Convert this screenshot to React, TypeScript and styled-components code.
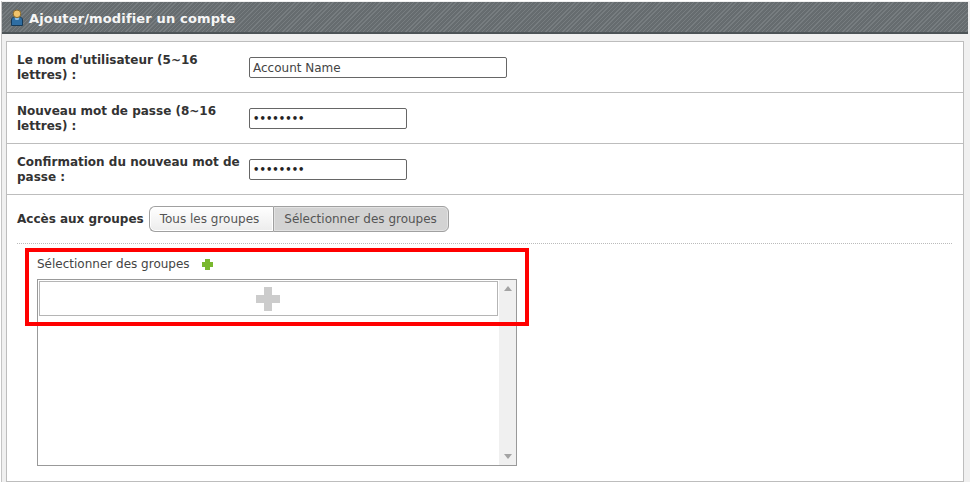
import React from "react";
import styled, { createGlobalStyle } from "styled-components";

const Global = createGlobalStyle`
  html, body { margin: 0; padding: 0; background: #fff; }
  body { font-family: "DejaVu Sans", Verdana, sans-serif; font-size: 12px; color: #333; }
`;

const Page = styled.div`
  position: relative;
  width: 970px;
  height: 482px;
  overflow: hidden;
  box-sizing: border-box;
  padding: 2px 2px 0;
  background: #f0f0f0;
  box-shadow: inset 1px 1px 0 #fff, inset 2px 0 0 #c4c4c4;
`;

const Header = styled.div`
  height: 32px;
  box-sizing: border-box;
  display: flex;
  align-items: center;
  gap: 4px;
  padding: 2px 0 0 7px;
  border-bottom: 2px solid #4d5457;
  background-color: #6e7477;
  background-image: repeating-linear-gradient(135deg, #777d80 0 1px, #666c6f 1px 3px);
  color: #f6f6f6;
  font-weight: bold;
  font-size: 13px;
  letter-spacing: 0.15px;
`;

const HeaderIcon = styled.svg`
  margin-top: -2px;
  flex: none;
`;

const Panel = styled.div`
  margin: 7px 4px 0;
  border: 1px solid #bdbdbd;
  background: #fff;
  height: 441px;
  box-sizing: border-box;
`;

const Row = styled.div`
  height: 51px;
  box-sizing: border-box;
  border-bottom: 1px solid #bdbdbd;
  padding: 1px 10px 0;
  display: flex;
  align-items: center;
`;

const Label = styled.div`
  width: 232px;
  flex: none;
  font-weight: bold;
  line-height: 15px;
  color: #333;
`;

const Field = styled.div<{ $w: number }>`
  width: ${(p) => p.$w}px;
  height: 21px;
  margin-top: -1px;
  box-sizing: border-box;
  border: 1px solid #666;
  border-radius: 2px;
  padding: 1px 3px 0;
  display: flex;
  align-items: center;
  color: #444;
  font-size: 12px;
  white-space: nowrap;
`;

const Dots = styled.span`
  font-size: 10px;
  letter-spacing: 0.05px;
  color: #222;
  font-weight: bold;
`;

const Access = styled.div`
  padding: 0 10px;
  height: 48px;
  display: flex;
  align-items: center;
  gap: 5px;
`;

const AccessLabel = styled.div`
  font-weight: bold;
  color: #333;
`;

const Segments = styled.div`
  display: flex;
`;

const Segment = styled.div<{ $active?: boolean; $first?: boolean }>`
  height: 26px;
  box-sizing: border-box;
  border: 1px solid #a0a0a0;
  ${(p) =>
    p.$first
      ? "border-radius: 6px 0 0 6px; border-right: 0; padding: 0 14px 0 10px;"
      : "border-radius: 0 6px 6px 0; padding: 0 11px 0 10px;"}
  display: flex;
  align-items: center;
  color: #555;
  background: ${(p) => (p.$active ? "#d3d3d3" : "linear-gradient(#fff, #ececec)")};
  box-shadow: inset 0 0 0 1px ${(p) => (p.$active ? "#e2e2e2" : "#fff")};
`;

const Section = styled.div`
  margin: 0 11px 0 10px;
  border-top: 1px dotted #bbb;
  padding: 12px 0 0 20px;
`;

const PickerTitle = styled.div`
  display: flex;
  align-items: center;
  height: 16px;
  color: #444;
`;

const TitleText = styled.span`
  width: 165px;
  flex: none;
  white-space: nowrap;
`;

const ListBox = styled.div`
  margin-top: 7px;
  width: 480px;
  height: 187px;
  box-sizing: border-box;
  border: 1px solid #999;
  display: flex;
`;

const ListBody = styled.div`
  flex: 1;
  padding: 1px;
`;

const AddRow = styled.div`
  height: 35px;
  box-sizing: border-box;
  border: 1px solid #b5b5b5;
  padding-right: 2px;
  display: flex;
  align-items: center;
  justify-content: center;
  background: #fff;
`;

const ScrollBar = styled.div`
  width: 17px;
  flex: none;
  background: #f0f0f0;
  display: flex;
  flex-direction: column;
  justify-content: space-between;
  align-items: center;
  padding: 6px 0;
  box-sizing: border-box;
`;

const Highlight = styled.div`
  position: absolute;
  left: 25px;
  top: 248px;
  width: 504px;
  height: 78px;
  box-sizing: border-box;
  border: 4px solid #f00;
`;

const Plus = ({ size, color, bar }: { size: number; color: string; bar: number }) => {
  const o = (size - bar) / 2;
  return (
    <svg width={size} height={size} viewBox={`0 0 ${size} ${size}`} shapeRendering="crispEdges">
      <rect x={o} y={0} width={bar} height={size} fill={color} />
      <rect x={0} y={o} width={size} height={bar} fill={color} />
    </svg>
  );
};

const UserIcon = () => (
  <HeaderIcon width="16" height="17" viewBox="0 0 16 17">
    <path d="M2.500 16.500V11c0-2 1.500-3 3-3h5c1.500 0 3 1 3 3v5.500Z" fill="#2f6ea3" stroke="#173a57" />
    <path d="M5.500 8.500h5l-1 2.500h-3Z" fill="#8dbde0" />
    <circle cx="8" cy="4.800" r="3.800" fill="#f0c46c" stroke="#8a6a2a" />
  </HeaderIcon>
);

const Arrow = ({ up }: { up?: boolean }) => (
  <svg width="8" height="5" viewBox="0 0 8 5">
    <path d={up ? "M4 0L8 5H0Z" : "M0 0H8L4 5Z"} fill="#a3a3a3" />
  </svg>
);

export default function App() {
  return (
    <Page>
      <Global />
      <Header>
        <UserIcon />
        Ajouter/modifier un compte
      </Header>
      <Panel>
        <Row>
          <Label>Le nom d'utilisateur (5~16 lettres) :</Label>
          <Field $w={258}>Account Name</Field>
        </Row>
        <Row>
          <Label>Nouveau mot de passe (8~16 lettres) :</Label>
          <Field $w={158}><Dots>••••••••</Dots></Field>
        </Row>
        <Row>
          <Label>Confirmation du nouveau mot de passe :</Label>
          <Field $w={158}><Dots>••••••••</Dots></Field>
        </Row>
        <Access>
          <AccessLabel>Accès aux groupes</AccessLabel>
          <Segments>
            <Segment $first>Tous les groupes</Segment>
            <Segment $active>Sélectionner des groupes</Segment>
          </Segments>
        </Access>
        <Section>
          <PickerTitle>
            <TitleText>Sélectionner des groupes</TitleText>
            <Plus size={11} bar={5} color="#7ab82f" />
          </PickerTitle>
          <ListBox>
            <ListBody>
              <AddRow>
                <Plus size={24} bar={8} color="#cccccc" />
              </AddRow>
            </ListBody>
            <ScrollBar>
              <Arrow up />
              <Arrow />
            </ScrollBar>
          </ListBox>
        </Section>
      </Panel>
      <Highlight />
    </Page>
  );
}
